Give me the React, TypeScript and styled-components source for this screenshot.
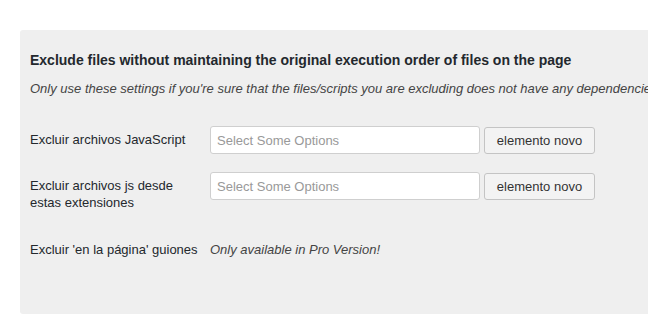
import React from "react";
import styled, { createGlobalStyle } from "styled-components";

const Global = createGlobalStyle`
  html, body { margin: 0; padding: 0; background: #ffffff; }
  body { font-family: "Liberation Sans", Arial, sans-serif; color: #23282d; overflow: hidden; }
`;

const Page = styled.div`
  width: 648px;
  height: 326px;
  padding: 30px 0 0 20px;
  box-sizing: border-box;
  overflow: hidden;
`;

const Panel = styled.div`
  width: 660px;
  height: 284px;
  box-sizing: border-box;
  background: #efefef;
  border-radius: 3px;
  padding: 21px 0 0 10px;
  white-space: nowrap;
`;

const Heading = styled.h3`
  margin: 0;
  font-size: 14px;
  font-weight: bold;
  line-height: 18px;
  color: #23282d;
`;

const Note = styled.p`
  margin: 11px 0 0;
  font-size: 13px;
  font-style: italic;
  line-height: 18px;
  color: #444;
`;

const Form = styled.div`
  display: grid;
  grid-template-columns: 180px auto;
  row-gap: 18px;
  margin-top: 28px;
  align-items: start;
`;

const Label = styled.div<{ $top?: number }>`
  font-size: 13px;
  line-height: 17px;
  color: #23282d;
  white-space: normal;
  padding-top: ${(p) => p.$top ?? 0}px;
`;

const Field = styled.div`
  display: flex;
  align-items: center;
  gap: 4px;
`;

const Select = styled.div`
  width: 270px;
  height: 28px;
  box-sizing: border-box;
  background: #fff;
  border: 1px solid #cfcfcf;
  border-radius: 3px;
  padding: 0 6px;
  display: flex;
  align-items: center;
  font-size: 13px;
  color: #999;
`;

const Button = styled.button`
  width: 111px;
  height: 27px;
  box-sizing: border-box;
  background: #f3f3f3;
  border: 1px solid #c4c4c4;
  border-radius: 3px;
  font-family: inherit;
  font-size: 13px;
  color: #333;
  padding: 0;
`;

const ProNote = styled.div`
  font-size: 13px;
  font-style: italic;
  line-height: 17px;
  color: #444;
  padding-top: 12px;
`;

export default function App() {
  return (
    <Page>
      <Global />
      <Panel>
        <Heading>Exclude files without maintaining the original execution order of files on the page</Heading>
        <Note>Only use these settings if you're sure that the files/scripts you are excluding does not have any dependencies</Note>
        <Form>
          <Label $top={5}>Excluir archivos JavaScript</Label>
          <Field>
            <Select>Select Some Options</Select>
            <Button>elemento novo</Button>
          </Field>
          <Label $top={5}>Excluir archivos js desde<br />estas extensiones</Label>
          <Field>
            <Select>Select Some Options</Select>
            <Button>elemento novo</Button>
          </Field>
          <Label $top={12}>Excluir 'en la página' guiones</Label>
          <ProNote>Only available in Pro Version!</ProNote>
        </Form>
      </Panel>
    </Page>
  );
}
